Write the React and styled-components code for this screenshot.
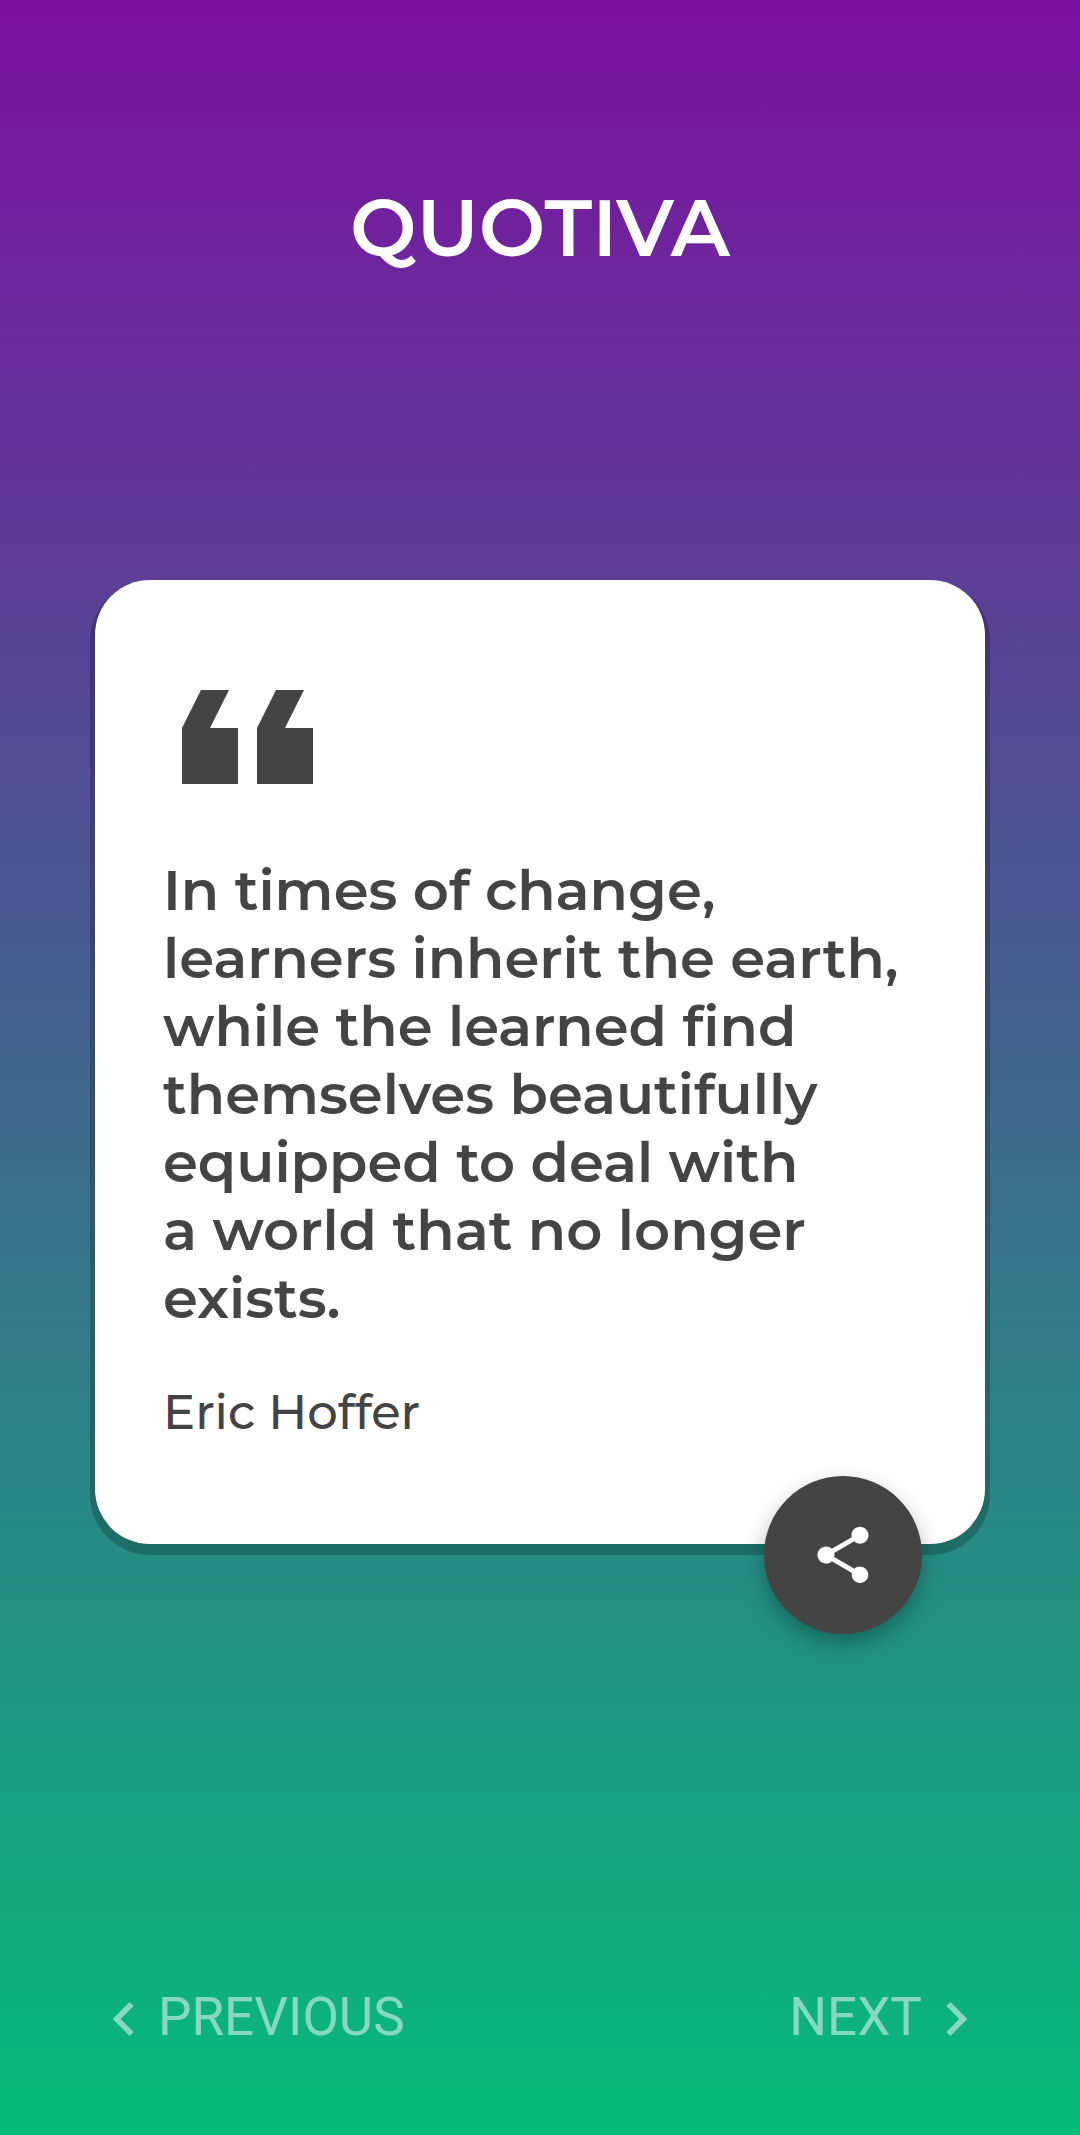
import React from "react";
import styled, { createGlobalStyle } from "styled-components";
import { MdChevronLeft, MdChevronRight, MdShare } from "react-icons/md";

const GlobalStyle = createGlobalStyle`
  *, *::before, *::after { box-sizing: border-box; }
  body { margin: 0; }
`;

const Screen = styled.div`
  min-height: 100vh;
  display: flex;
  flex-direction: column;
  background: linear-gradient(180deg, #7c10a1 0%, #06bb7a 100%);
  font-family: Montserrat, Inter, sans-serif;
`;

const Header = styled.header`
  padding: 180px 24px 0;
  text-align: center;
`;

const Title = styled.h1`
  margin: 0;
  color: #ffffff;
  font-size: 79px;
  font-weight: 600;
  line-height: 96px;
`;

const Main = styled.main`
  padding: 304px 95px 96px;
`;

const Card = styled.article`
  position: relative;
  padding: 110px 68px 102px;
  border-radius: 55px;
  background: #ffffff;
  color: #444444;
  box-shadow: 0 6px 0 5px rgba(0, 0, 0, 0.22);
`;

const QuoteMark = styled.svg`
  display: block;
  margin-left: 19px;
  fill: #444444;
`;

const Quote = styled.blockquote`
  margin: 72px 0 0;
  font-size: 56px;
  font-weight: 600;
  line-height: 68px;
  font-variant-ligatures: none;
  white-space: pre-line;
`;

const Author = styled.p`
  margin: 50px 0 0;
  font-size: 48px;
  font-weight: 500;
  line-height: 60px;
  font-variant-ligatures: none;
`;

const ShareButton = styled.button`
  position: absolute;
  right: 63px;
  bottom: -90px;
  display: flex;
  align-items: center;
  justify-content: center;
  width: 158px;
  height: 158px;
  padding: 0;
  border: 0;
  border-radius: 50%;
  background: #444444;
  color: #ffffff;
  font-size: 68px;
  cursor: pointer;
  box-shadow: 0 10px 22px rgba(0, 0, 0, 0.3);
`;

const Pager = styled.nav`
  display: flex;
  justify-content: space-between;
  margin-top: auto;
  padding: 0 90px 82px;
`;

const PagerButton = styled.button`
  display: flex;
  align-items: center;
  padding: 0;
  border: 0;
  background: none;
  color: rgba(255, 255, 255, 0.5);
  font-family: Roboto, sans-serif;
  font-size: 53px;
  font-weight: 400;
  line-height: 60px;
  cursor: pointer;

  svg {
    width: 68px;
    height: 68px;
  }
`;

const PagerLabel = styled.span`
  padding-bottom: 4px;
`;

const quote = {
  text: `In times of change,
learners inherit the earth,
while the learned find
themselves beautifully
equipped to deal with
a world that no longer
exists.`,
  author: "Eric Hoffer",
};

export default function App() {
  return (
    <Screen>
      <GlobalStyle />
      <Header>
        <Title>QUOTIVA</Title>
      </Header>
      <Main>
        <Card>
          <QuoteMark width="132" height="94" viewBox="0 0 132 94" aria-hidden="true">
            <path d="M19 0h28L28 38h28v56H0V38zM94 0h28l-19 38h28v56H75V38z" />
          </QuoteMark>
          <Quote>{quote.text}</Quote>
          <Author>{quote.author}</Author>
          <ShareButton type="button" aria-label="Share">
            <MdShare />
          </ShareButton>
        </Card>
      </Main>
      <Pager aria-label="Quotes">
        <PagerButton type="button">
          <MdChevronLeft />
          <PagerLabel>PREVIOUS</PagerLabel>
        </PagerButton>
        <PagerButton type="button">
          <PagerLabel>NEXT</PagerLabel>
          <MdChevronRight />
        </PagerButton>
      </Pager>
    </Screen>
  );
}
